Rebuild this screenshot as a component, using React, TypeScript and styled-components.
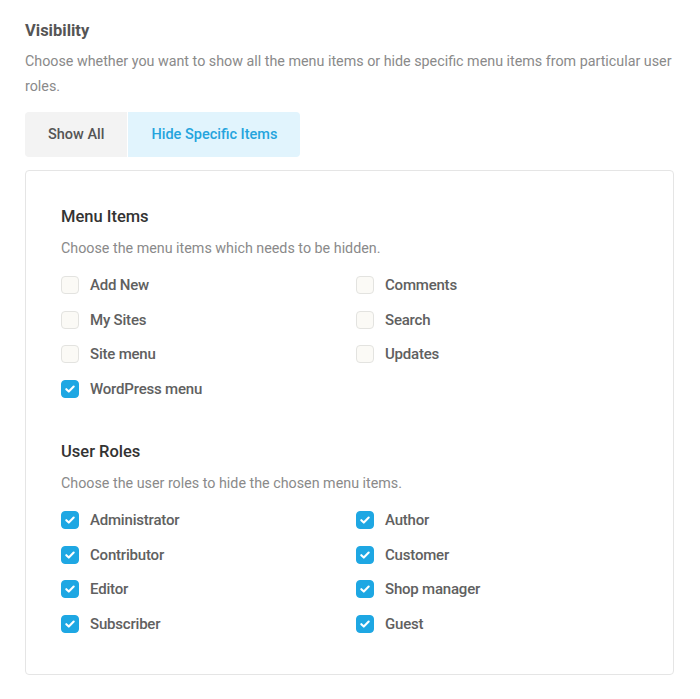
import styled, { createGlobalStyle } from "styled-components";

const GlobalStyle = createGlobalStyle`
  body {
    margin: 0;
    background: #fff;
    font-family: Roboto, "Liberation Sans", Arial, sans-serif;
  }
`;

const Page = styled.div`
  padding: 21px 26px 0 25px;
`;

const Title = styled.h2`
  margin: 0;
  font-size: 16.5px;
  line-height: 20px;
  font-weight: 700;
  color: #555;
`;

const Intro = styled.p`
  margin: 8px 0 0;
  font-size: 14.3px;
  line-height: 25px;
  color: #8a8a8a;
`;

const Toggle = styled.div`
  display: flex;
  gap: 1px;
  margin-top: 13px;
`;

const ToggleButton = styled.button<{ $active?: boolean }>`
  height: 45px;
  padding: 0 23px;
  border: 0;
  font-family: inherit;
  font-size: 14.5px;
  font-weight: 500;
  cursor: pointer;
  background: ${(p) => (p.$active ? "#e1f4fd" : "#f3f3f3")};
  color: ${(p) => (p.$active ? "#25a4dd" : "#555")};
  border-radius: ${(p) => (p.$active ? "0 4px 4px 0" : "4px 0 0 4px")};
`;

const Card = styled.div`
  margin-top: 13px;
  border: 1px solid #e5e5e5;
  border-radius: 4px;
  padding: 35px 35px 33px;
`;

const Section = styled.section`
  & + & {
    margin-top: 35px;
  }
`;

const SectionTitle = styled.h3`
  margin: 0;
  font-size: 16.5px;
  line-height: 22px;
  font-weight: 500;
  color: #333;
`;

const SectionHint = styled.p`
  margin: 9px 0 9px;
  font-size: 14.3px;
  line-height: 22px;
  color: #8a8a8a;
`;

const Options = styled.div<{ $rows: number }>`
  display: grid;
  grid-template-columns: 295px 1fr;
  grid-auto-flow: column;
  grid-template-rows: ${(p) => `repeat(${p.$rows}, 34.5px)`};
`;

const Option = styled.label`
  display: flex;
  align-items: center;
  gap: 11px;
  font-size: 15px;
  font-weight: 500;
  letter-spacing: -0.2px;
  color: #606060;
  cursor: pointer;
`;

const Box = styled.span<{ $checked?: boolean }>`
  width: 18px;
  height: 18px;
  box-sizing: border-box;
  border-radius: 4px;
  display: flex;
  align-items: center;
  justify-content: center;
  background: ${(p) => (p.$checked ? "#1ea7e3" : "#fbfaf6")};
  border: 1px solid ${(p) => (p.$checked ? "#1ea7e3" : "#e3e3e0")};
`;

const Check = () => (
  <svg width="12" height="12" viewBox="0 0 12 12" fill="none">
    <path d="M2.3 6.2l2.5 2.4L9.7 3.6" stroke="#fff" strokeWidth="2.1" strokeLinecap="round" strokeLinejoin="round" />
  </svg>
);

type Item = { label: string; checked: boolean };

const menuItems: Item[] = [
  { label: "Add New", checked: false },
  { label: "My Sites", checked: false },
  { label: "Site menu", checked: false },
  { label: "WordPress menu", checked: true },
  { label: "Comments", checked: false },
  { label: "Search", checked: false },
  { label: "Updates", checked: false },
];

const roles: Item[] = [
  { label: "Administrator", checked: true },
  { label: "Contributor", checked: true },
  { label: "Editor", checked: true },
  { label: "Subscriber", checked: true },
  { label: "Author", checked: true },
  { label: "Customer", checked: true },
  { label: "Shop manager", checked: true },
  { label: "Guest", checked: true },
];

const CheckList = ({ items, rows }: { items: Item[]; rows: number }) => (
  <Options $rows={rows}>
    {items.map((item) => (
      <Option key={item.label}>
        <Box $checked={item.checked}>{item.checked && <Check />}</Box>
        {item.label}
      </Option>
    ))}
  </Options>
);

export default function App() {
  return (
    <>
      <GlobalStyle />
      <Page>
        <Title>Visibility</Title>
        <Intro>
          Choose whether you want to show all the menu items or hide specific menu items from particular user roles.
        </Intro>
        <Toggle>
          <ToggleButton>Show All</ToggleButton>
          <ToggleButton $active>Hide Specific Items</ToggleButton>
        </Toggle>
        <Card>
          <Section>
            <SectionTitle>Menu Items</SectionTitle>
            <SectionHint>Choose the menu items which needs to be hidden.</SectionHint>
            <CheckList items={menuItems} rows={4} />
          </Section>
          <Section>
            <SectionTitle>User Roles</SectionTitle>
            <SectionHint>Choose the user roles to hide the chosen menu items.</SectionHint>
            <CheckList items={roles} rows={4} />
          </Section>
        </Card>
      </Page>
    </>
  );
}
